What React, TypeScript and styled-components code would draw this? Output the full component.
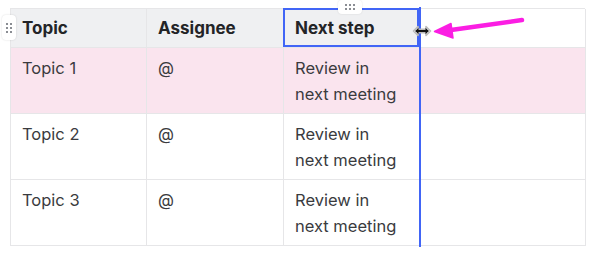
import React from 'react'
import styled, { createGlobalStyle } from 'styled-components'

const BLUE = '#4165f6'
const LINE = '#e6e6e8'

const GlobalStyle = createGlobalStyle`
  html, body {
    margin: 0;
    background: #fff;
  }
  body {
    font-family: Inter, "Noto Sans", "Liberation Sans", sans-serif;
    -webkit-font-smoothing: antialiased;
  }
`

const columns = [
  { key: 'topic', title: 'Topic', width: 136 },
  { key: 'assignee', title: 'Assignee', width: 137 },
  { key: 'next', title: 'Next step', width: 136 },
  { key: 'empty', title: '', width: 166 },
]

const rows = [
  { topic: 'Topic 1', assignee: '@', next: 'Review in next meeting', highlight: true },
  { topic: 'Topic 2', assignee: '@', next: 'Review in next meeting' },
  { topic: 'Topic 3', assignee: '@', next: 'Review in next meeting' },
]

const SELECTED_COL = 2

const App: React.FC = () => {
  return (
    <>
      <GlobalStyle />
      <Page>
        <TableWrap>
          <Grid $cols={columns.map((c) => c.width + 'px').join(' ')}>
            {columns.map((col, i) => (
              <HeadCell
                key={col.key}
                $selected={i === SELECTED_COL}
                $colLine={i === SELECTED_COL}
                $blank={!col.title}
              >
                {col.title}
                {i === SELECTED_COL && (
                  <ColHandle>
                    <Dots $cols={3} $rows={2} />
                  </ColHandle>
                )}
              </HeadCell>
            ))}
            {rows.map((row, r) =>
              columns.map((col, i) => (
                <Cell key={r + col.key} $pink={!!row.highlight} $colLine={i === SELECTED_COL}>
                  {i < 3 ? (row as any)[col.key] : ''}
                </Cell>
              )),
            )}
          </Grid>
          <RowHandle>
            <Dots $cols={2} $rows={3} />
          </RowHandle>
          <Cursor>
            <svg width="20" height="12" viewBox="0 0 20 12">
              <path
                d="M1.5 6 L6 1.5 V4.2 H14 V1.5 L18.5 6 L14 10.5 V7.8 H6 V10.5 Z"
                fill="#fff"
                stroke="#bbb"
                strokeWidth="1.6"
                strokeLinejoin="round"
              />
              <path d="M3 6 L6.5 3 V5 H13.5 V3 L17 6 L13.5 9 V7 H6.5 V9 Z" fill="#111" />
            </svg>
          </Cursor>
          <Arrow>
            <svg width="100" height="24" viewBox="0 0 100 24">
              <line x1="89" y1="3" x2="18" y2="13" stroke="#fb1ee3" strokeWidth="4.5" strokeLinecap="round" />
              <path d="M1.5 14.5 L18 6.5 L20 21 Z" fill="#fb1ee3" stroke="#fb1ee3" strokeWidth="1.5" strokeLinejoin="round" />
            </svg>
          </Arrow>
        </TableWrap>
      </Page>
    </>
  )
}

export default App

const Page = styled.div`
  padding: 8px 10px;
  width: 597px;
  height: 253px;
  box-sizing: border-box;
`

const TableWrap = styled.div`
  position: relative;
  width: 575px;
`

const Grid = styled.div<{ $cols: string }>`
  display: grid;
  grid-template-columns: ${(p) => p.$cols};
  border-top: 1px solid ${LINE};
  border-left: 1px solid ${LINE};
  box-sizing: border-box;
`

const BaseCell = styled.div<{ $colLine?: boolean }>`
  position: relative;
  box-sizing: border-box;
  border-right: 1px solid ${LINE};
  border-bottom: 1px solid ${LINE};
  padding: 0 16px 0 11px;
  &::after {
    content: '';
    display: ${(p) => (p.$colLine ? 'block' : 'none')};
    position: absolute;
    top: -1px;
    bottom: -2px;
    right: -2px;
    width: 2px;
    background: ${BLUE};
    z-index: 2;
  }
`

const HeadCell = styled(BaseCell)<{ $selected?: boolean; $blank?: boolean }>`
  display: flex;
  align-items: center;
  background: ${(p) => (p.$blank ? '#fff' : '#eff0f2')};
  font-weight: 700;
  font-size: 17px;
  color: #232427;
  box-shadow: ${(p) => (p.$selected ? `inset 0 0 0 2px ${BLUE}` : 'none')};
  margin-left: ${(p) => (p.$selected ? '-1px' : '0')};
  margin-top: ${(p) => (p.$selected ? '-1px' : '0')};
  height: ${(p) => (p.$selected ? '40px' : '39px')};
  padding-left: ${(p) => (p.$selected ? '12px' : '11px')};
`

const Cell = styled(BaseCell)<{ $pink?: boolean }>`
  height: 66px;
  padding-top: 7px;
  font-size: 16.5px;
  line-height: 26px;
  color: #3a3b3e;
  background: ${(p) => (p.$pink ? '#fae4ee' : '#fff')};
`

const ColHandle = styled.div`
  position: absolute;
  top: -8px;
  left: 55px;
  width: 24px;
  height: 14px;
  background: #fff;
  border-radius: 4px;
  box-shadow: 0 0 2px rgba(0, 0, 0, 0.12);
  display: flex;
  align-items: center;
  justify-content: center;
  z-index: 3;
`

const RowHandle = styled.div`
  position: absolute;
  top: 7px;
  left: -8px;
  width: 14px;
  height: 25px;
  background: #fff;
  border-radius: 4px;
  box-shadow: 0 0 2px rgba(0, 0, 0, 0.15);
  display: flex;
  align-items: center;
  justify-content: center;
  z-index: 3;
`

const Dots = styled.div<{ $cols: number; $rows: number }>`
  background-image: radial-gradient(circle, #8a8d93 0.9px, transparent 1.1px);
  background-size: 4px 4px;
  background-position: -1px -1px;
  width: ${(p) => p.$cols * 4 - 2}px;
  height: ${(p) => p.$rows * 4 - 2}px;
`

const Cursor = styled.div`
  position: absolute;
  left: 402px;
  top: 17px;
  width: 20px;
  height: 12px;
  z-index: 4;
  svg {
    display: block;
  }
`

const Arrow = styled.div`
  position: absolute;
  left: 423px;
  top: 9px;
  z-index: 4;
  svg {
    display: block;
  }
`
